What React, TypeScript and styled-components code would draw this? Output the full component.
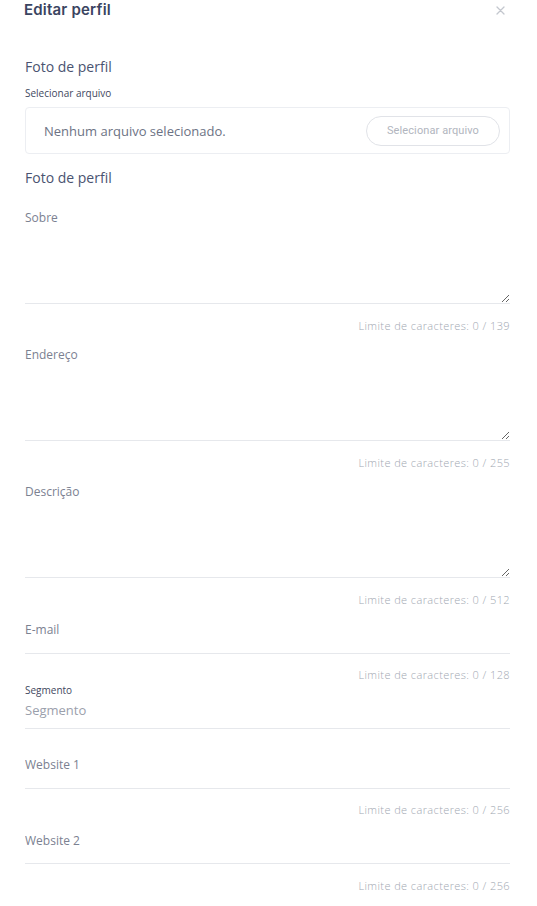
import React from "react";
import styled, { createGlobalStyle } from "styled-components";

const Global = createGlobalStyle`
  html, body { margin: 0; padding: 0; background: #ffffff; }
  body { font-family: "Open Sans", "Liberation Sans", sans-serif; }
  * { box-sizing: border-box; }
`;

const Page = styled.div`
  width: 537px;
  padding: 0 27px 20px 25px;
  display: flex;
  flex-direction: column;
`;

const Header = styled.header`
  height: 20px;
  display: flex;
  align-items: center;
  justify-content: space-between;
  margin-left: -1px;
`;

const Title = styled.h1`
  margin: 0;
  font-family: "Inter", "Noto Sans", sans-serif;
  font-size: 15px;
  line-height: 20px;
  font-weight: 600;
  color: #3a4461;
  letter-spacing: 0.2px;
`;

const Close = styled.button`
  border: 0;
  background: none;
  padding: 0;
  margin-right: 4px;
  width: 12px;
  height: 12px;
  display: flex;
  align-items: center;
  justify-content: center;
  cursor: pointer;
`;

const SectionTitle = styled.h2<{ $top: number }>`
  margin: ${(p) => p.$top}px 0 0;
  font-size: 14px;
  line-height: 20px;
  font-weight: 500;
  color: #4a5371;
`;

const SmallLabel = styled.label<{ $top: number }>`
  display: block;
  margin-top: ${(p) => p.$top}px;
  font-size: 10px;
  line-height: 14px;
  font-weight: 500;
  color: #3f4760;
`;

const FileBox = styled.div`
  margin-top: 7px;
  height: 47px;
  border: 1px solid #eceef2;
  border-radius: 4px;
  display: flex;
  align-items: center;
  justify-content: space-between;
  padding: 0 9px 0 18px;
`;

const FileText = styled.span`
  font-size: 13px;
  color: #6c7284;
`;

const FileButton = styled.button`
  width: 134px;
  height: 30px;
  border: 1px solid #e1e3e8;
  border-radius: 16px;
  background: #ffffff;
  font-family: "Roboto", "Liberation Sans", sans-serif;
  font-size: 11px;
  font-weight: 400;
  letter-spacing: 0.1px;
  color: #b1b5be;
  padding: 0;
`;

const TextArea = styled.textarea<{ $top: number }>`
  display: block;
  width: 100%;
  height: 95px;
  margin-top: ${(p) => p.$top}px;
  padding: 0;
  border: 0;
  border-bottom: 1px solid #e6e8ec;
  font-family: "Open Sans", sans-serif;
  font-size: 12px;
  line-height: 18px;
  color: #4a5371;
  resize: vertical;
  outline: none;
  background: transparent;
  &::placeholder { color: #7b8191; }
`;

const Input = styled.input<{ $top: number; $pb: number }>`
  display: block;
  width: 100%;
  margin-top: ${(p) => p.$top}px;
  padding: 0 0 ${(p) => p.$pb}px;
  height: ${(p) => 18 + p.$pb + 1}px;
  border: 0;
  border-bottom: 1px solid #e6e8ec;
  font-family: "Open Sans", sans-serif;
  font-size: 12px;
  line-height: 18px;
  color: #4a5371;
  outline: none;
  background: transparent;
  &::placeholder { color: #7b8191; }
`;

const SelectLike = styled(Input)`
  font-size: 13px;
  &::placeholder { color: #9ba0ac; }
`;

const Limit = styled.div<{ $top: number }>`
  margin-top: ${(p) => p.$top}px;
  text-align: right;
  font-size: 11px;
  line-height: 16px;
  font-weight: 300;
  color: #a2a8b2;
  letter-spacing: 0.4px;
`;

export default function App() {
  return (
    <>
      <Global />
      <Page>
        <Header>
          <Title>Editar perfil</Title>
          <Close aria-label="Fechar">
            <svg width="9" height="9" viewBox="0 0 9 9">
              <path d="M1 1L8 8M8 1L1 8" stroke="#c3c7ce" strokeWidth="1.3" strokeLinecap="round" />
            </svg>
          </Close>
        </Header>

        <SectionTitle $top={37}>Foto de perfil</SectionTitle>
        <SmallLabel $top={9}>Selecionar arquivo</SmallLabel>
        <FileBox>
          <FileText>Nenhum arquivo selecionado.</FileText>
          <FileButton>Selecionar arquivo</FileButton>
        </FileBox>

        <SectionTitle $top={14}>Foto de perfil</SectionTitle>

        <TextArea $top={21} placeholder="Sobre" />
        <Limit $top={14}>Limite de caracteres: 0 / 139</Limit>

        <TextArea $top={12} placeholder="Endereço" />
        <Limit $top={14}>Limite de caracteres: 0 / 255</Limit>

        <TextArea $top={12} placeholder="Descrição" />
        <Limit $top={14}>Limite de caracteres: 0 / 512</Limit>

        <Input $top={12} $pb={15} placeholder="E-mail" />
        <Limit $top={13}>Limite de caracteres: 0 / 128</Limit>

        <SmallLabel $top={0}>Segmento</SmallLabel>
        <SelectLike $top={4} $pb={9} placeholder="Segmento" />

        <Input $top={26} $pb={15} placeholder="Website 1" />
        <Limit $top={13}>Limite de caracteres: 0 / 256</Limit>

        <Input $top={13} $pb={14} placeholder="Website 2" />
        <Limit $top={14}>Limite de caracteres: 0 / 256</Limit>
      </Page>
    </>
  );
}
